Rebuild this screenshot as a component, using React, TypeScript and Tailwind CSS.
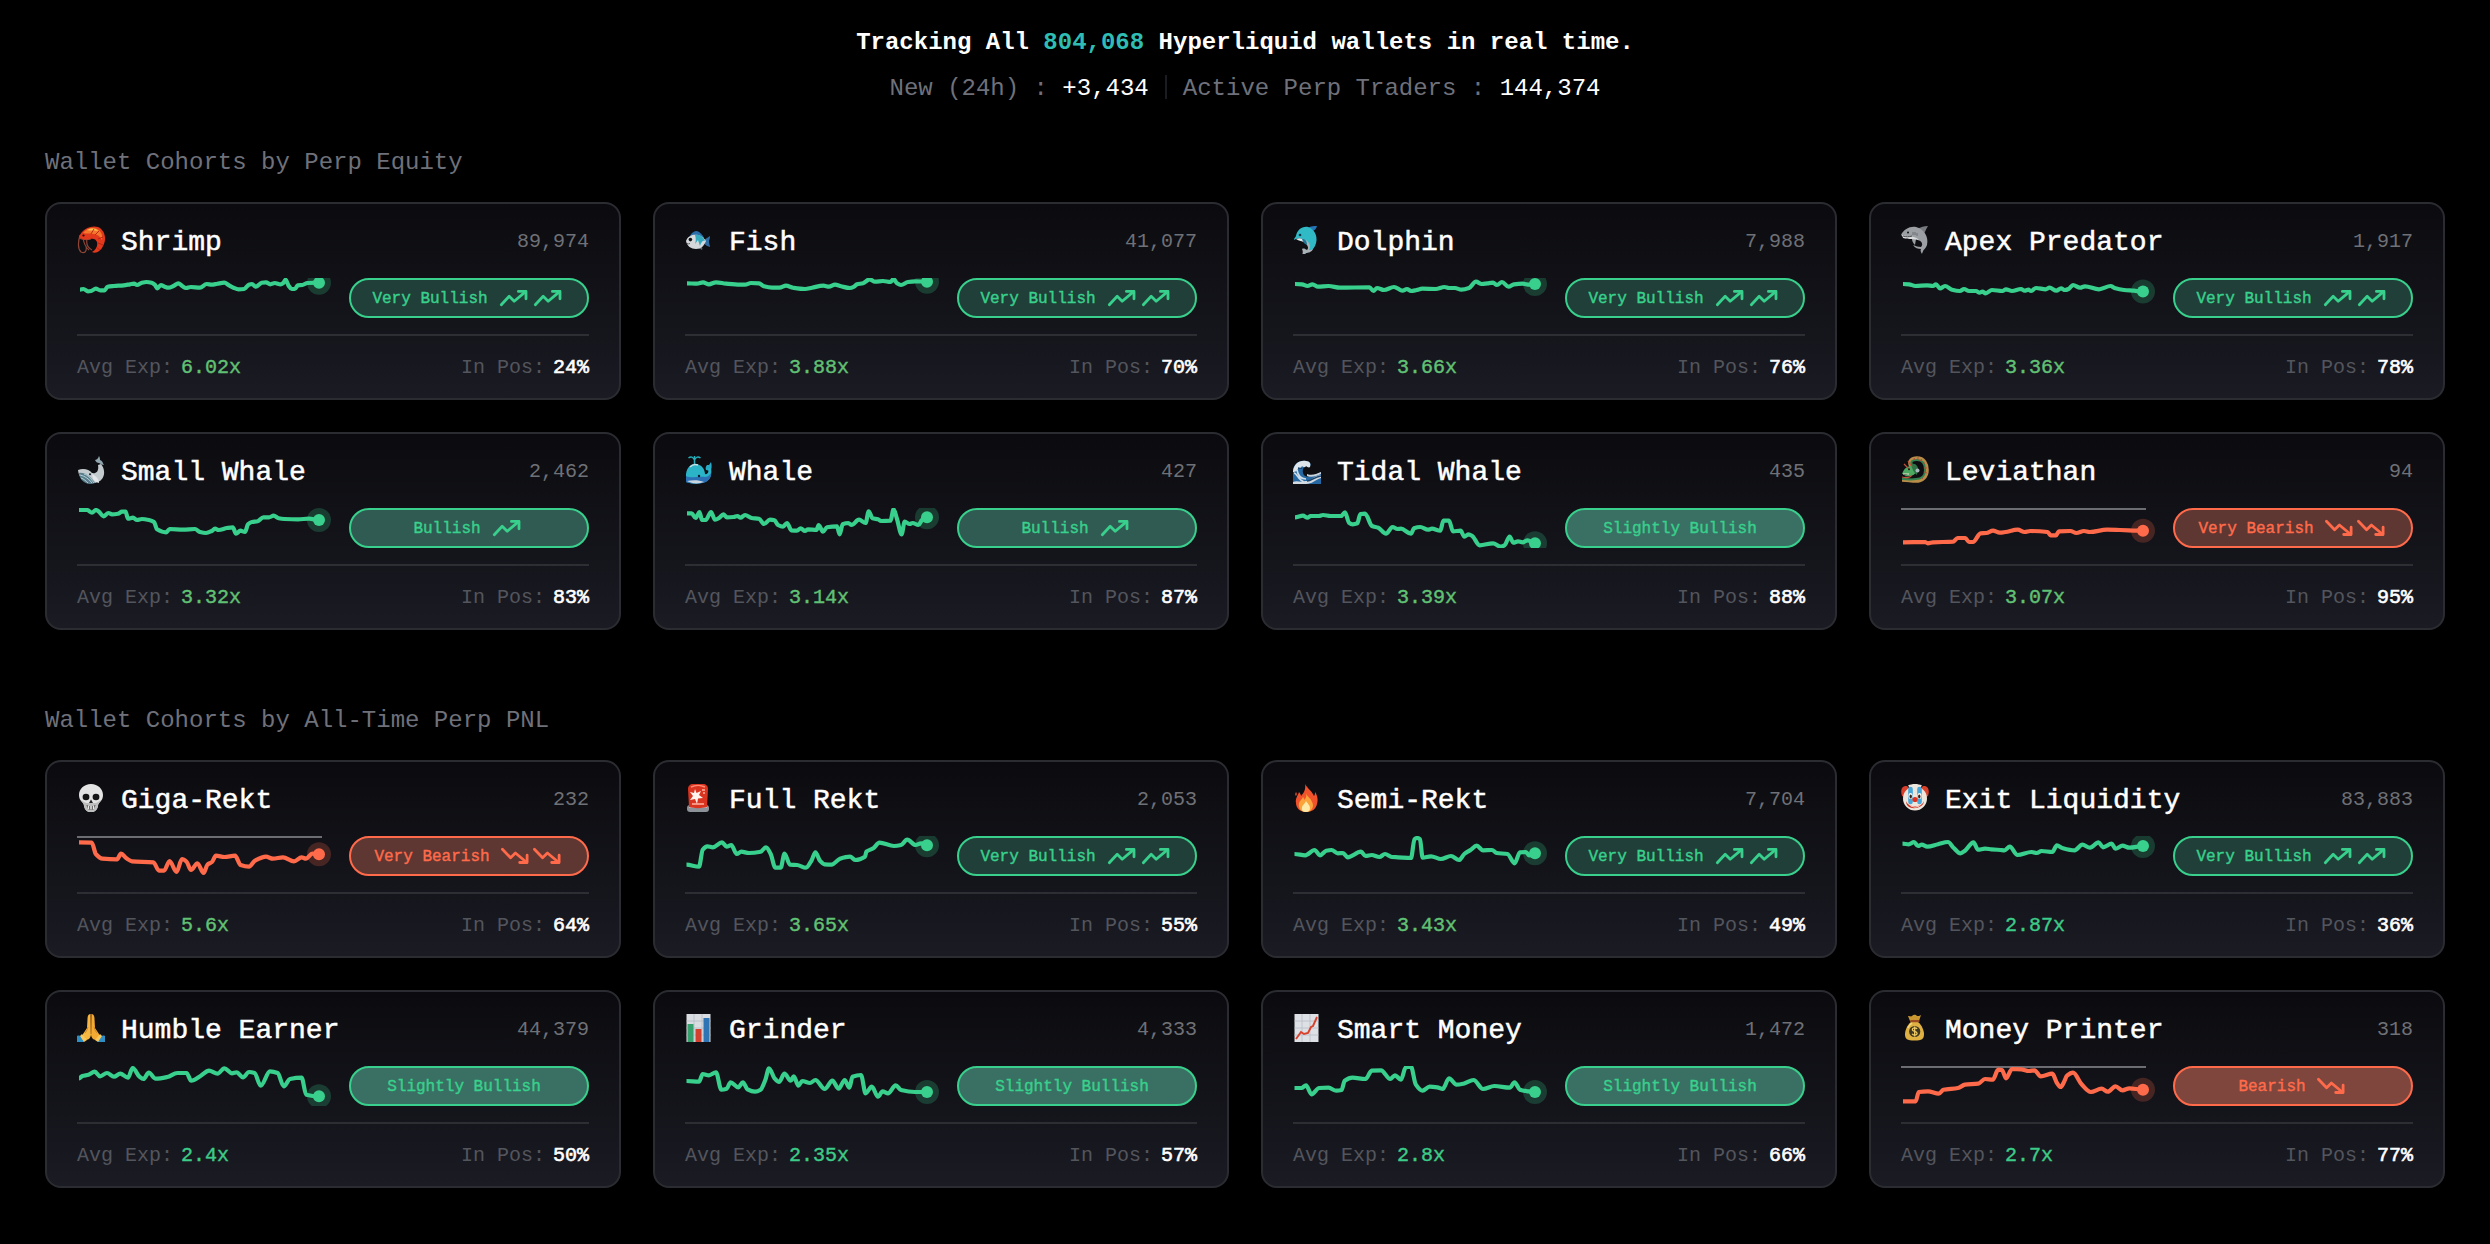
import type { ReactNode } from 'react'
import clsx from 'clsx'

type Sentiment = 'very-bullish' | 'bullish' | 'slightly-bullish' | 'bearish' | 'very-bearish'

interface Cohort {
  name: string
  icon: ReactNode
  count: string
  sentiment: Sentiment
  exposure: number
  inPosition: number
  points: string
}

const GREEN = '#38d08c'
const RED = '#ff6b4a'

/* ---------- Icons ---------- */

function Glyph({ children }: { children: ReactNode }) {
  return (
    <svg viewBox="0 0 28 28" className="mb-1.5 size-7 shrink-0" fill="none">
      {children}
    </svg>
  )
}

const ShrimpIcon = (
  <Glyph>
    <path d="M3 9C1 16 0 22 4 26c4 2 6-1 5-6M6 12c1 6 2 9 6 12M10 13c-1 5 1 9 5 11M2 12c4 2 8 2 12 1" stroke="#8f4636" strokeWidth="1.2" />
    <path d="M2 11C5 3 14-1 21 1c7 3 9 12 5 19-2 5-7 8-11 6 4-2 6-6 5-10-1-3-4-4-7-3-4 1-8 1-11-2Z" fill="#e2391c" />
    <path d="M6 7C10 2 16 1 20 3c4 2 6 6 5 11-2-4-5-6-9-6-4-1-7 0-10-1Z" fill="#f4752b" />
    <path d="M10 4c4-2 9-2 11 1-4-1-8 0-11-1Z" fill="#fbc04f" />
    <path d="m14 8 3-5M18 9l4-4M21 13l5-2M21 17l5 2M19 21l4 3" stroke="#b32413" strokeWidth=".9" />
    <circle cx="6.5" cy="9.5" r="1.1" fill="#1a0d0a" />
  </Glyph>
)

const FishIcon = (
  <Glyph>
    <path d="m19 14 6-4c0 3-1 4-1 5 0 3 1 4 1 6-3-1-5-2-6-4Z" fill="#2f6ea5" />
    <path d="M5 10c1-3 4-5 7-5 3 1 5 3 7 7Z" fill="#2b6da8" />
    <path d="M12 22c2 0 3 1 5 2 1-2 0-3-1-4Z" fill="#59636c" />
    <path d="M1 15C3 9 9 8 13 9c4 1 6 3 8 6-2 5-5 8-10 8-5 0-9-3-10-8Z" fill="#d5d9dc" />
    <path d="M10 9c4-1 8 1 10 6-2-1-4 1-5 5l-2-6-3 4c1-3 1-6 0-9Z" fill="#35a9bd" />
    <circle cx="5.4" cy="13.6" r="1.8" fill="#111" />
    <path d="M2 17.500c1 .5 2 .5 3 0" stroke="#666" />
  </Glyph>
)

const DolphinIcon = (
  <Glyph>
    <path d="M15 2c3-2 6-2 9-2-1 3-2 4-4 5Z" fill="#2674b6" />
    <path d="M10 12c6 0 12 5 10 11-1 3-5 4-7 4-1 2-2 2-4 2 1-2 1-4 0-6 2-1 3 0 5 1 3-3-1-7-7-10Z" fill="#a9b0b6" />
    <path d="M1 14c0-2 1-2 2-4C4 4 9 0 15 1c7 2 11 11 7 19-2 4-4 4-6 4 3-5-1-10-6-11-3-1-6-1-9 1Z" fill="#2fbac6" />
    <path d="M3 13c4-2 8 0 9 3-3-1-6-1-9-3Z" fill="#e4eaed" />
    <circle cx="7" cy="9" r="1.300" fill="#12324a" />
    <path d="M9 13c1 3 2 5 5 6 0-3-1-5-3-6Z" fill="#1b7795" />
  </Glyph>
)

const SharkIcon = (
  <Glyph>
    <path d="M16 3c4-2 7-3 11-3-2 3-3 6-4 8Z" fill="#777b80" />
    <path d="M0 9C3 3 9 0 15 1c8 2 13 10 11 18-1 3-3 4-4 6 0 1-1 2-1 3-1-2-2-3-1-5-3 0-6-1-8-4 3 1 5 2 8 2 3-3 0-7-5-8l-1 6c-2-2-3-4-3-6-4-1-8-1-11-4Z" fill="#9ca0a4" />
    <path d="M1 9c6 2 13 0 18 6-5-3-11-1-17-3Z" fill="#d8dadc" />
    <path d="M2 10c3 1 6 1 9 0" stroke="#47494c" />
    <circle cx="7" cy="6.400" r="1" fill="#111" />
    <path d="M12 6v3M14 6v3M16 7v3" stroke="#5f6367" strokeWidth=".8" />
  </Glyph>
)

const SmallWhaleIcon = (
  <Glyph>
    <path d="M18 4c1 0 3-1 4-4 1 2 1 3 1 4 3 1 3 4 4 5-2 0-3-1-5-2-2 0-3-1-4-3Z" fill="#8fa4ad" />
    <path d="M1 14c5-2 11-1 14 3 5 1 7-3 6-8l3-1c5 6 4 15-3 18-9 4-19-1-20-12Z" fill="#c4cbcf" />
    <path d="M2 17c6-1 12 4 16 10C9 30 3 25 2 17Z" fill="#5b7d8b" />
    <path d="M3 19c5 1 9 4 12 8M4 22c3 1 5 3 7 5M7 18c4 1 7 5 10 9" stroke="#b9d9df" strokeWidth=".9" />
    <path d="M15 18c4 2 7 5 7 9-3-1-5-2-6-4Z" fill="#e3e7e9" />
    <circle cx="13" cy="18.300" r="1" fill="#15222a" />
  </Glyph>
)

const WhaleIcon = (
  <Glyph>
    <path d="M9.500 9V3M9.500 4C8 1 6 0 3.500 2M9.500 4c1.500-3 3.500-4 6-2M9.500 3V0" stroke="#27aeb8" strokeWidth="1.500" />
    <path d="M21 14c-1-2 0-4 1-5l2 0 2-3c1 4 1 7-1 9Z" fill="#27a9c6" />
    <path d="M1 18C2 11 6 8 10 8c7 0 10 6 10 10 3 1 4-3 3-5l3-1c1 6 0 10-4 13-5 3-14 4-21 1Z" fill="#2bb3c7" />
    <path d="M1 20c6 3 11 0 19 1 2 0 4-1 6-4 0 5-2 7-5 9-6 2-14 2-20 0Z" fill="#2b6fb5" />
    <path d="M2 25c6-1 12-1 17 1-5 2-12 2-17-1Z" fill="#c9d6df" />
    <path d="M5 11c2-2 5-3 8-2" stroke="#c5dfe2" strokeWidth="1.500" />
    <circle cx="14" cy="20" r="1.200" fill="#0d1d33" />
  </Glyph>
)

const WaveIcon = (
  <Glyph>
    <path d="M0 28V14C1 8 6 4 13 5c4 1 6 3 4 5-5-1-8 2-7 7 1 5 8 5 18-1v12Z" fill="#2668a4" />
    <path d="M0 15C1 8 6 4 13 5c4 0 5 3 4 6-1 1-3 0-4-1-1 2-3 1-4 0-1 3-3 2-4 2 0 3-3 4-5 4Z" fill="#dde4ea" />
    <path d="M1 17c3 0 4 7 10 9M4 14c1 6 4 9 9 9" stroke="#cfdde8" strokeWidth="1.700" />
    <path d="M0 26c5-2 7 1 12-1 6 1 8-5 16-6v3c-6 2-9 6-15 6H0Z" fill="#d3dae0" />
    <path d="M14 18c5 2 9 0 14-2v2c-5 2-9 4-14 2Z" fill="#c9d3dc" />
    <path d="M5 12c2 0 3 1 4 0M14 25c5 0 7-4 14-5" stroke="#1d4468" strokeWidth="1.300" />
  </Glyph>
)

const DragonIcon = (
  <Glyph>
    <path d="M10 10C7 5 11 2 16 2c7 0 10 6 10 12 0 7-5 11-11 11-5 0-9-1-14-1" stroke="#b98d48" strokeWidth="3.600" />
    <path d="M11 9C9 5 12 4 16 4c6 0 8 5 8 10 0 6-4 9-9 9-5 1-9 0-14 0" stroke="#35804f" strokeWidth="2" />
    <path d="M1 18c2-5 4-7 8-8 4-2 7 0 7 4-1 5-6 7-13 6 1-1 3-1 4-2Z" fill="#4da862" />
    <path d="M10 8c3-1 6 0 7 4l-1 7c-3-2-5-6-6-11Z" fill="#2f7346" />
    <path d="m3 8 5 5M7 5l4 6M1 21c4 1 8 1 10-2" stroke="#c4533e" strokeWidth="1.200" />
    <path d="m13 2 1 2M17 1v3M21 3l-2 2M24 7l-2 1M26 12h-3M26 17l-3-1M22 23l-2-2" stroke="#b34e3a" />
    <path d="M2 18h6" stroke="#f0e9d0" />
    <circle cx="16.500" cy="14.500" r="2" fill="#a9b8bd" />
    <circle cx="8" cy="13.300" r="1" fill="#1a1a10" />
  </Glyph>
)

const SkullIcon = (
  <Glyph>
    <path d="M14 0c7 0 12 5 12 11 0 3-1 5-3 7-1 1-2 2-2 4-1 4-3 6-7 6s-6-2-7-6c0-2-1-3-2-4-2-2-3-4-3-7C2 5 7 0 14 0Z" fill="#e4e4e4" />
    <path d="M4 16c2 1 4 3 6 3h8c2 0 4-2 6-3-1 3-3 3-3 6-1 4-3 6-7 6s-6-2-7-6c0-3-2-3-3-6Z" fill="#bdbdbd" />
    <ellipse cx="9" cy="13" rx="3.400" ry="3.200" fill="#161616" />
    <ellipse cx="19" cy="13" rx="3.400" ry="3.200" fill="#161616" />
    <path d="m14 15.500 2 3.500h-4Z" fill="#222" />
    <path d="M9.500 21c3 1.500 6 1.500 9 0l-1.500 4c-2 1-4 1-6 0Z" fill="#3a3a3a" />
    <path d="M11.500 21.500V25M14 22v3.500M16.500 21.500V25" stroke="#e8e8e8" strokeWidth="1.600" />
  </Glyph>
)

const SirenIcon = (
  <Glyph>
    <rect x="2" y="21" width="22" height="7" rx="3" fill="#8c9298" />
    <path d="M4 23h18" stroke="#d4d8dc" strokeWidth="1.500" />
    <path d="M4 23 3 5c0-3 2-5 5-5h10c3 0 5 2 5 5l-1 18c-5 1.500-13 1.500-18 0Z" fill="#d93420" />
    <path d="M6 3c4-2 10-2 14 0" stroke="#ff8b72" strokeWidth="1.600" />
    <path d="m10 5 1.500 4 4.500-2-2 4 4 3-5 .5L12 20l-2-5-5 1 3-4-3-4 4 1Z" fill="#fff3ee" />
    <path d="M17 6h3M18 9h2M7 20h12" stroke="#ffb3a1" strokeWidth="1.300" />
  </Glyph>
)

const FireIcon = (
  <Glyph>
    <path d="M12 0c2 4 7 7 9 12 1-1 1-3 1-4 3 4 3 9 2 12-1 5-5 8-11 8S3 24 3 19c-1-4 2-8 3-11 1 1 2 3 2 4 3-3 5-7 4-12Z" fill="#f0532b" />
    <path d="M13 9c1 4 5 5 6 9 3 5-1 10-6 10s-8-4-7-9c1-3 3-3 4-6 1 1 1 2 1 3 2-2 3-4 2-7Z" fill="#f9a33a" />
    <path d="M13 17c1 2 4 4 4 7s-2 4-4 4-5-1-4-4c0-3 3-4 4-7Z" fill="#ffe9a8" />
    <path d="M3 8c-1 2-1 3 0 4 1-1 1-3 0-4Z" fill="#f0532b" />
  </Glyph>
)

const ClownIcon = (
  <Glyph>
    <path d="M1 12C-1 6 1 2 5 2c2 0 3 2 3 4l-3 8Zm26 0c2-6 0-10-4-10-2 0-3 2-3 4l3 8Z" fill="#d9402c" />
    <circle cx="14" cy="14.500" r="12" fill="#ece6dc" />
    <path d="M7 1.500c4-2 10-2 14 0l-3 4h-8Z" fill="#ece6dc" />
    <path d="M9.500 5v13M18.500 5v13" stroke="#47a7d8" strokeWidth="4.600" strokeLinecap="round" />
    <ellipse cx="9.500" cy="12" rx="2" ry="3" fill="#fff" />
    <ellipse cx="18.500" cy="12" rx="2" ry="3" fill="#fff" />
    <ellipse cx="9.700" cy="12.500" rx="1.200" ry="2" fill="#3b2014" />
    <ellipse cx="18.300" cy="12.500" rx="1.200" ry="2" fill="#3b2014" />
    <circle cx="14" cy="15.500" r="2.600" fill="#e0301e" />
    <path d="M5 17c2 7 16 7 18 0 0 8-18 11-18 0Z" fill="#cf2f20" />
    <path d="M8 20.500c4 3 8 3 12 0-2 4-10 4-12 0Z" fill="#fff" />
  </Glyph>
)

const PrayIcon = (
  <Glyph>
    <path d="M0 22c2-1 5 0 7 2v4H0ZM28 22c-2-1-5 0-7 2v4h7Z" fill="#2f8fc4" />
    <path d="M13.500 0c-2 0-3 2-3 5L10 14 6 20c-1 2 0 5 3 6 3 0 5-3 5-6Z" fill="#f7b740" />
    <path d="M14.500 0c2 0 3 2 3 5l.5 9 4 6c1 2 0 5-3 6-3 0-5-3-5-6Z" fill="#f4a932" />
    <path d="M14 0v20" stroke="#b9701e" strokeWidth="1.100" />
    <path d="M11 13c-1 3-2 5-3 6M17 13c1 3 2 5 3 6" stroke="#cf8526" />
    <path d="m5 20 5 6-3 2-4-6ZM23 20l-5 6 3 2 4-6Z" fill="#fbc75a" />
  </Glyph>
)

const BarChartIcon = (
  <Glyph>
    <rect x="1.500" y="0" width="24" height="28" fill="#d9dde2" />
    <path d="M1.500 7h24M1.500 14h24M1.500 21h24M9 0v28M17 0v28" stroke="#b5bcc5" strokeWidth=".8" />
    <rect x="2.500" y="10" width="6" height="18" fill="#35a06b" />
    <rect x="10.500" y="15" width="6" height="13" fill="#d2402e" />
    <rect x="18.500" y="4" width="6" height="24" fill="#2f74b5" />
  </Glyph>
)

const LineChartIcon = (
  <Glyph>
    <rect x="1.500" y="0" width="24" height="28" fill="#dde0e4" />
    <path d="M1.500 7h24M1.500 14h24M1.500 21h24M9 0v28M17 0v28" stroke="#b9bfc7" strokeWidth=".8" />
    <path d="m3 25 5-7 3 2 4-1 3-6 2-1 4-9" stroke="#d8412c" strokeWidth="1.900" />
  </Glyph>
)

const MoneyBagIcon = (
  <Glyph>
    <path d="M9 7 7 2c2 0 3 1 4 0 2-2 4-1 5 0 1 0 3 0 4-1l-2 6Z" fill="#c9962f" />
    <path d="M10 8h7c4 3 6 9 6 12 0 5-2 6.500-9.500 6.500S4 25 4 20c0-3 2-9 6-12Z" fill="#dfb143" />
    <path d="M7 14c1-2 2-4 4-5" stroke="#f5d77c" strokeWidth="1.500" />
    <rect x="9" y="6" width="9.500" height="2.200" rx="1" fill="#9a4a22" />
    <circle cx="13.700" cy="17.500" r="5.600" fill="#3d3521" />
    <path d="M16.100 15c-1-1.600-4.800-1.400-4.800.6 0 2.400 4.800 1.300 4.800 3.800 0 2-4 2.200-5 .4M13.700 12.500v10" stroke="#f0cc66" strokeWidth="1.300" />
  </Glyph>
)

function TrendUp() {
  return (
    <svg width="34" height="16" viewBox="0 0 34 16" className="overflow-visible" fill="none" stroke="currentColor" strokeWidth="2.800" strokeLinecap="round" strokeLinejoin="round">
      <path d="m5.300 14.800 7.900-8.600 5 5L29.600 1.600" />
      <path d="M22.400 1.400H30v7.400" />
    </svg>
  )
}

function TrendDown() {
  return (
    <svg width="32" height="16" viewBox="0 0 32 16" className="overflow-visible" fill="none" stroke="currentColor" strokeWidth="2.800" strokeLinecap="round" strokeLinejoin="round">
      <path d="m4.400 1.300 8.200 8.500 4.800-4.800 11.100 9.300" />
      <path d="M21.700 14.500h7.400V7.200" />
    </svg>
  )
}

/* ---------- Data ---------- */

const EQUITY_COHORTS: Cohort[] = [
  {
    name: 'Shrimp', icon: ShrimpIcon, count: '89,974', sentiment: 'very-bullish', exposure: 6.02, inPosition: 24,
    points: '3,11.7 6.5,11 11,13.3 14,13 18.8,10.7 23.3,12.3 27.5,12.3 30.6,8.7 37,8 46.7,7.3 53,6.3 57,5.7 60,7 65,4.7 69.6,4 74.6,4.7 77.7,6.7 80.4,10.3 83.8,7 87.6,8.7 91.5,9.7 96.4,8 101.4,5.3 105.2,8 109,10 113.7,9 123,9.7 129.7,6 134.7,6.7 140.4,5.7 147.3,4.7 152,7.3 156.5,9.7 161.5,11.3 167.2,11 171.8,6.7 175,6 178.7,8.7 184.8,4.7 189,4.3 193.3,6.3 197.8,5 203.6,6.3 206.3,5 208.6,1.7 211.6,7.7 214.7,11 217.8,11 220.8,7.3 225.4,7 230.4,5 242,4.7',
  },
  {
    name: 'Fish', icon: FishIcon, count: '41,077', sentiment: 'very-bullish', exposure: 3.88, inPosition: 70,
    points: '2,5.3 12,5.7 18,4.3 24,6.3 31,4.3 41,5.7 55,6.7 60,6.7 66,5 74,5.3 79,8.3 87,9.7 94.5,9.7 101,7.7 108,9.7 120,11 127,9.7 138.5,7.7 144,8.7 150,6.7 156,8.3 165,10 169,8.7 172,6.3 178,5.3 184.5,1.3 190,3.7 198,3 205.5,4 208.6,1 212,5.3 216,7 223,4 230,3.3 242,3.7',
  },
  {
    name: 'Dolphin', icon: DolphinIcon, count: '7,988', sentiment: 'very-bullish', exposure: 3.66, inPosition: 76,
    points: '2,6 9,6.3 14.5,8 19.5,6.3 25,8.7 35.6,8 47,9.7 76.5,9.3 80.4,13 84,10 91,12 101,9 109.5,12.7 114,11 118,13 123.6,12 129.3,10.7 142.7,11 151.5,9 156,10 162,10 168.4,11.7 176,10 183,3.7 188.7,6 194.4,5.3 200,4.7 204,7 209,4 215.5,8.7 221,6.3 229.6,5.7 236.5,6.7 242,6',
  },
  {
    name: 'Apex Predator', icon: SharkIcon, count: '1,917', sentiment: 'very-bullish', exposure: 3.36, inPosition: 78,
    points: '2,6 8,6.3 14.5,8 26,7.3 32,8 35,6.3 39,10.3 44,8 51,11.7 59,13 63,11 68,13 75,13 78.5,14.7 81.5,13.7 84.6,15.3 91,12 101.4,13 105,11.3 111,13 120,11 123.6,12.7 127.4,11.7 130,13 135,10 144.7,11.3 148.5,9.7 155.4,12.7 160,10.3 164,12 167.6,11 172,7 179,9.7 184,8.3 198,11.3 209.7,8 213.5,10 223,12 233,12.7 242,13.5',
  },
  {
    name: 'Small Whale', icon: SmallWhaleIcon, count: '2,462', sentiment: 'bullish', exposure: 3.32, inPosition: 83,
    points: '2,2 10,2 15,4.7 18.8,2 22,3.7 26.4,8.3 31.4,5 35,6.3 41,5.7 45,3.7 48.6,3.7 51,10.7 56,9.7 60,12 65,11 72,12 77,14 80,21.3 89,24.3 92.6,21 106,21.7 118,21 123,24 129,25 134.7,23 138,20.7 141.6,22 150,20 155.8,19.3 159,25.7 163.4,22.7 168,24 171,16.3 175,14 180.6,13.3 186.4,9.3 192,9.3 196.7,7.7 201.7,10.3 207.4,11 221,11.3 232,10.7 242,12',
  },
  {
    name: 'Whale', icon: WhaleIcon, count: '427', sentiment: 'bullish', exposure: 3.14, inPosition: 87,
    points: '2,5.3 6.5,5.3 10.7,10 14.5,4 17,12 20.7,12 26,4 30,11.7 34.4,9.7 38.3,6.3 42,9.3 48.6,9 52.4,8 55.5,9.7 60,7 66.6,10 74,10.7 79,16 85,11.7 89.5,12.3 93,17 98,18.7 102,15 106.4,22.3 112,22.7 115.6,20.3 120,23 123,21.3 131.6,22 133.6,17 138,23.7 142,19.3 152,18.3 154.6,26.3 157.7,16.3 163.4,15 166.5,17 174,11.7 180.6,15 183.7,3.3 187.5,10.3 193,11.3 196,13 205.5,12.7 208.6,1.3 212,11 216.6,26.3 219.7,13.7 224.6,16 227.7,15 233.4,17 237,12 242,9.3',
  },
  {
    name: 'Tidal Whale', icon: WaveIcon, count: '435', sentiment: 'slightly-bullish', exposure: 3.39, inPosition: 88,
    points: '2,9.3 10,7.7 14.5,9.7 17.6,8 26,8 30,7 37.5,8 48,8 52,4.3 56,14.7 59.7,16.3 64.3,15.3 67.4,6 72,5.7 79,18 85.3,19.7 93,25.7 99.5,19 104.5,21 108,20.7 118,25.7 121,20.3 127.4,19 135,21.7 139,20.7 147.3,22.7 150.4,12.7 156,12.7 160,23.3 167.6,22.7 171.4,28.7 175.3,26.3 179,27.7 186.7,37.3 200,35.3 207.8,38.7 211.6,37.3 216.6,28.7 220.4,34.7 225,33.3 229.6,34.3 234.6,32.3 242,35.3',
  },
  {
    name: 'Leviathan', icon: DragonIcon, count: '94', sentiment: 'very-bearish', exposure: 3.07, inPosition: 95,
    points: '2,34.3 24,34 26.8,35.3 32,34.3 52,33.7 56.6,30 64.3,30 68,34 72,34 79.6,25.3 85.3,25 92,22.7 98.7,24.7 104.5,24 116.7,21.7 123.6,24 129.3,23 146.6,24 149.6,27.3 155,27.3 158,23.3 169.5,23 175.3,25 183,23 188.7,24 206,21.7 219,22 242,22.7',
  },
]

const PNL_COHORTS: Cohort[] = [
  {
    name: 'Giga-Rekt', icon: SkullIcon, count: '232', sentiment: 'very-bearish', exposure: 5.6, inPosition: 64,
    points: '2,6.3 14.7,6.7 19,18.3 25.5,22.7 40,23.3 44,17.7 49.4,22.3 55,25.3 76.4,26.3 82,34.7 87,34.7 92.6,25 99.5,36 105,23 109.6,25.7 114,34 120.4,27.3 126.6,37 130.4,28.7 135,26 139,19.7 147.4,21 158,19.7 163.6,29 172,30.7 178,24.7 189,20.7 196,22.7 206,21.3 217,25.3 224.6,21.3 229,22.7 235.4,17.7 242,18.3',
  },
  {
    name: 'Full Rekt', icon: SirenIcon, count: '2,053', sentiment: 'very-bullish', exposure: 3.65, inPosition: 55,
    points: '1.5,28.7 14,30.7 17.7,13.7 22.4,10.3 27.8,11.3 37,6.3 41.7,10.7 46.3,9 51.7,18 56.3,15.7 64,17 75.6,15.7 81,11.3 85.7,18 90.3,31.7 95.7,31.7 99.5,17.7 105,28.7 112,29 121,31.7 126.6,24.3 130.4,16.3 135,24.7 139.7,28.3 146.6,28.7 155,22.7 165,20.7 170.5,24 180,20.7 181.4,15.7 188.3,12.3 194.5,6.7 209,10 216,9 222.2,3.7 230.7,9 236,7.3 242,9.3',
  },
  {
    name: 'Semi-Rekt', icon: FireIcon, count: '7,704', sentiment: 'very-bullish', exposure: 3.43, inPosition: 49,
    points: '1.5,18 12.3,19.3 21.6,14 27,19.3 33.2,14.7 38.6,14 44.8,17.3 50,17 54.8,21.3 68,15.7 72.5,20 78.7,19 86.4,21 92,18 98.8,21 105,21.3 118,22 121.5,3.3 124.2,2 127,3.3 129.6,21.7 138,20.3 148,23 158,20 166,24 171.3,18 177.5,14 183.7,9.7 190,14.3 199,14 203.7,17 214.5,18 221.5,27.3 227,16.3 233,16 236,19.3 242,17.3',
  },
  {
    name: 'Exit Liquidity', icon: ClownIcon, count: '83,883', sentiment: 'very-bullish', exposure: 2.87, inPosition: 36,
    points: '1.5,7.7 7.7,8.3 13,6 17,10 20.8,8.7 26.2,10.7 37,8.3 47,6 52.5,11.7 59.4,17.3 64,14.7 72.5,6.3 77,13.7 84,12.7 90.3,13.3 99.5,14 103.4,14.3 108.8,10.7 116.5,19 130.4,16 135.8,17 140.5,15 151.3,16 155.9,9.3 161.3,12 173.6,14.3 181.4,8.7 189,11.7 197.6,6.3 202,11.3 210.7,7.7 214.5,12.7 221.5,9.7 228.4,11.7 242,10',
  },
  {
    name: 'Humble Earner', icon: PrayIcon, count: '44,379', sentiment: 'slightly-bullish', exposure: 2.4, inPosition: 50,
    points: '2,12.3 5.4,10 11.6,8.7 17.7,5.7 23,10.3 30,7 37,10.7 43.2,7.7 51,11.7 55.6,2 62.5,10.7 66.4,13 71.8,6.7 78.7,12.7 90.3,11 100.3,7 109.6,7 114.2,14.7 123.5,10 132,4.7 140.5,7.7 147.4,2.3 155,7.3 159.7,6.3 166,11.3 172,6 177.5,7 183.7,19.7 193,5.3 200.6,7 206.8,20.3 213,13 224.6,11.7 229.2,28.7 242,30.3',
  },
  {
    name: 'Grinder', icon: BarChartIcon, count: '4,333', sentiment: 'slightly-bullish', exposure: 2.35, inPosition: 57,
    points: '1.5,15 14,15.7 17.7,8 24,9.3 31,6.3 36.3,23.7 41.7,22.7 45.5,16.3 53.2,21.3 57.9,16.3 62.5,23.3 70,25.7 75.6,23.7 80.3,14 84,2.3 89.5,12.3 94,16 99.5,7.7 105.7,14.7 108.8,10.3 113.4,19.7 117.3,15 125,17 130.4,14 139.7,23 147.4,14.7 153.6,22.7 159.7,14 164.4,21.7 167.5,10.7 176,9 180.6,27.3 186.8,20.7 193,30.7 197.6,25.3 203,27.3 210.7,19.3 216,24 230,26 242,26',
  },
  {
    name: 'Smart Money', icon: LineChartIcon, count: '1,472', sentiment: 'slightly-bullish', exposure: 2.8, inPosition: 66,
    points: '1.5,22 8.5,22 13,19.3 18.5,28.3 26.2,22 35.5,21.7 43.2,24.7 48.6,24 51.7,14.7 59.4,11.7 72.5,13 78.7,4.7 88,4.3 97.2,13 102,9.3 108,13.7 112.7,1.3 118,0.7 122.7,18.3 129.6,24.7 136.6,20.7 144.3,21.3 149.7,23 156,12.3 163.6,18.7 170.5,17.7 180.6,14 190,23 201.4,20 216.8,21.7 221.5,16.3 227,23.7 234.6,25.3 242,26',
  },
  {
    name: 'Money Printer', icon: MoneyBagIcon, count: '318', sentiment: 'bearish', exposure: 2.7, inPosition: 77,
    points: '2,35.3 14.7,35.3 17.7,26 27,25.3 37.8,27.7 42.4,23.7 57,22 64,18.7 77.2,17.7 84,13 91.8,13.7 97.2,3.7 101,4 105,12.3 111,3 120.4,3.3 128,5 133.5,4.3 139.7,10.3 151.3,7.7 156,17 159.7,21 163,16 166,9.7 172,6.7 180.6,18.3 189.8,26 200.6,22.7 206.8,25.7 214.5,20.3 221.5,24.3 228.4,22.3 242,23.7',
  },
]

const BADGES: Record<Sentiment, { label: string; className: string; arrows: number }> = {
  'very-bullish': { label: 'Very Bullish', className: 'border-[#38d08c] bg-[#203f38] text-[#38d08c]', arrows: 2 },
  bullish: { label: 'Bullish', className: 'border-[#38d08c] bg-[#305b52] text-[#38d08c]', arrows: 1 },
  'slightly-bullish': { label: 'Slightly Bullish', className: 'border-[#38d08c] bg-[#3a6f64] text-[#38d08c]', arrows: 0 },
  bearish: { label: 'Bearish', className: 'border-[#ff6b4a] bg-[#7f463d] text-[#ff6b4a]', arrows: 1 },
  'very-bearish': { label: 'Very Bearish', className: 'border-[#ff6b4a] bg-[#5e3632] text-[#ff6b4a]', arrows: 2 },
}

const isBearish = (sentiment: Sentiment) => sentiment.endsWith('bearish')

/* ---------- Components ---------- */

// Monotone cubic through the points, so peaks are rounded but never overshoot
function smoothPath(pts: number[][]) {
  const slopes = pts.slice(1).map(([x, y], i) => (y - pts[i][1]) / (x - pts[i][0]))
  const tangents = pts.map((_, i) => {
    const before = slopes[i - 1]
    const after = slopes[i]
    if (before === undefined || after === undefined || before * after <= 0) return 0
    return (2 * before * after) / (before + after)
  })

  return pts.reduce((path, [x, y], i) => {
    if (i === 0) return `M${x} ${y}`
    const [px, py] = pts[i - 1]
    const third = (x - px) / 3
    return `${path}C${px + third} ${py + tangents[i - 1] * third} ${x - third} ${y - tangents[i] * third} ${x} ${y}`
  }, '')
}

function Sparkline({ points, bearish }: { points: string; bearish: boolean }) {
  const color = bearish ? RED : GREEN
  const pts = points.split(' ').map((p) => p.split(',').map(Number))
  const [endX, endY] = pts[pts.length - 1]

  return (
    <svg width="256" height="40" viewBox="0 0 256 40" className="shrink-0" fill="none">
      {/* zero line only shows when the cohort is net short */}
      {bearish && <path d="M0 1h245" stroke="#6b6d73" strokeWidth="2" />}
      <path d={smoothPath(pts)} stroke={color} strokeWidth="4.200" strokeLinejoin="round" />
      <circle cx={endX} cy={endY} r="12" fill={color} fillOpacity="0.22" />
      <circle cx={endX} cy={endY} r="6" fill={color} />
    </svg>
  )
}

function SentimentBadge({ sentiment }: { sentiment: Sentiment }) {
  const { label, className, arrows } = BADGES[sentiment]
  const Arrow = isBearish(sentiment) ? TrendDown : TrendUp

  return (
    <div className={clsx('flex h-10 w-60 items-center justify-center gap-2 rounded-full border-2 pr-0.5', className)}>
      <span className="pt-0.5 text-base leading-6 whitespace-nowrap [-webkit-text-stroke:0.4px]">{label}</span>
      <span className="flex">
        {Array.from({ length: arrows }, (_, i) => (
          <Arrow key={i} />
        ))}
      </span>
    </div>
  )
}

function CohortCard({ cohort }: { cohort: Cohort }) {
  return (
    <div className="rounded-2xl border-2 border-[#2b2c31] bg-linear-to-b from-[#0b0b0f] to-[#1a1b23] px-[30px] pt-[18px] pb-3.5">
      <div className="flex h-[42px] items-center justify-between">
        <div className="flex items-center gap-4">
          {cohort.icon}
          <h3 className="text-[28px] leading-[42px] text-white [-webkit-text-stroke:0.5px]">{cohort.name}</h3>
        </div>
        <span className="mb-0.5 text-xl leading-[30px] text-[#6f7177]">{cohort.count}</span>
      </div>

      <div className="mt-3.5 flex justify-between">
        <Sparkline points={cohort.points} bearish={isBearish(cohort.sentiment)} />
        <SentimentBadge sentiment={cohort.sentiment} />
      </div>

      <div className="mt-4 flex justify-between border-t-2 border-[#2d2e33] pt-[17px] pb-px text-xl leading-[30px]">
        <div className="flex gap-2">
          <span className="text-[#53555d]">Avg Exp:</span>
          <span
            className={clsx(
              '[-webkit-text-stroke:0.4px]',
              cohort.exposure >= 3 ? 'text-[#60c174]' : 'text-[#3ccb88]',
            )}
          >
            {cohort.exposure}x
          </span>
        </div>
        <div className="flex gap-2">
          <span className="text-[#53555d]">In Pos:</span>
          <span className="text-white [-webkit-text-stroke:0.6px]">{cohort.inPosition}%</span>
        </div>
      </div>
    </div>
  )
}

function CohortSection({ title, cohorts, className }: { title: string; cohorts: Cohort[]; className?: string }) {
  return (
    <section className={className}>
      <h2 className="mb-[21px] text-2xl leading-9 text-[#6f717a]">{title}</h2>
      <div className="grid grid-cols-4 gap-8">
        {cohorts.map((cohort) => (
          <CohortCard key={cohort.name} cohort={cohort} />
        ))}
      </div>
    </section>
  )
}

export default function App() {
  return (
    <main className="min-h-screen bg-black px-[45px] pt-[25px] font-['Liberation_Mono',monospace]">
      <header className="flex flex-col items-center gap-2.5 text-2xl leading-9">
        <h1 className="font-bold text-white">
          Tracking All <span className="text-[#2fbdb3]">804,068</span> Hyperliquid wallets in real time.
        </h1>
        <div className="flex items-center gap-4 text-[#6f717a]">
          <p>
            New (24h) : <span className="text-white">+3,434</span>
          </p>
          <div className="mb-1 h-6 w-0.5 bg-[#1b1c21]" />
          <p>
            Active Perp Traders : <span className="text-white">144,374</span>
          </p>
        </div>
      </header>

      <CohortSection className="mt-[38px]" title="Wallet Cohorts by Perp Equity" cohorts={EQUITY_COHORTS} />
      <CohortSection className="mt-[73px]" title="Wallet Cohorts by All-Time Perp PNL" cohorts={PNL_COHORTS} />
    </main>
  )
}
